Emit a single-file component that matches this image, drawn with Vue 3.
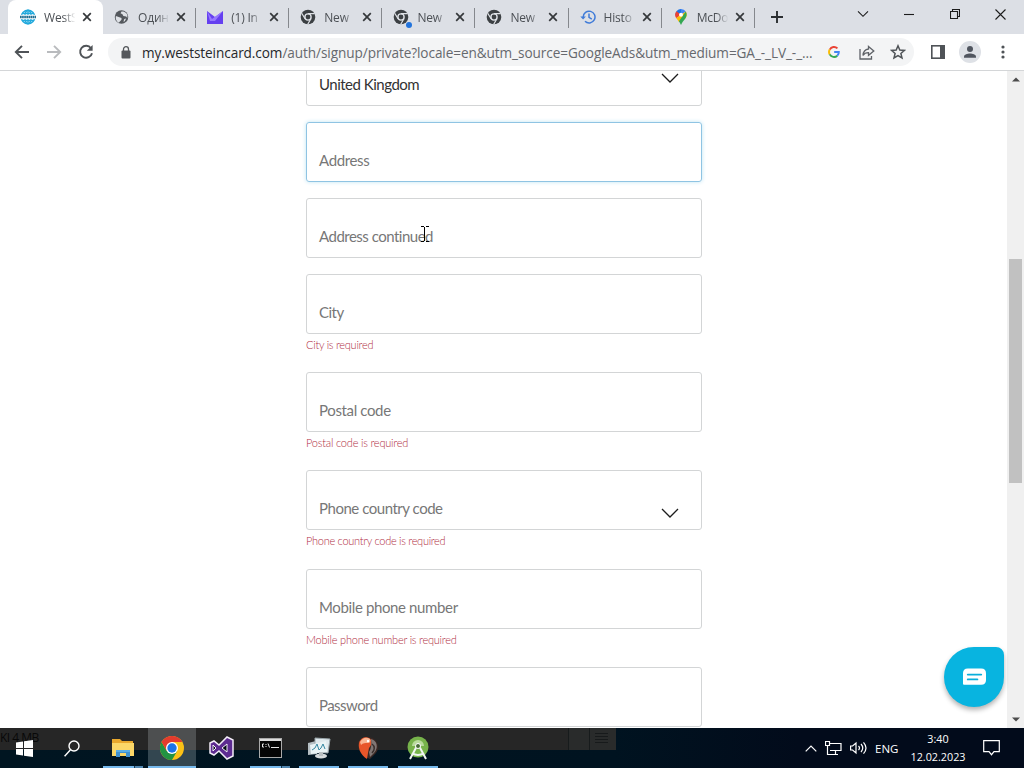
<template>
  <div class="screen">
    <div class="tab-strip">
      <div
        v-for="(tab, index) in tabs"
        :key="index"
        class="tab"
        :class="{ active: index === 0 }"
      >
        <svg class="tab-icon" viewBox="0 0 16 16">
          <g v-if="tab.icon === 'globe'" fill="none" stroke="#22a9dc" stroke-width="1.5">
            <circle cx="8" cy="8" r="6.8" />
            <ellipse cx="8" cy="8" rx="3.2" ry="6.8" />
            <path d="M8 1v14M2 4.5h12M2 11.5h12" />
            <path d="M0 8h16" stroke="#fff" stroke-width="4.4" />
            <path d="M0 8h16" stroke="#246f91" stroke-width="2.6" stroke-dasharray="1.7 .4" />
          </g>
          <g v-else-if="tab.icon === 'earth'">
            <circle cx="8" cy="8" r="7.2" fill="#54585d" />
            <path d="M2 7l3 1 3 1v2l-2 2-1 1.2A7 7 0 0 1 2 7zM8 2l-1 2 2 1 1 2 3 .5 1.2 1.5A6 6 0 0 0 10 2.2zM11 10l2-.5-1.5 3-1.5.5z" fill="#dee1e6" />
          </g>
          <g v-else-if="tab.icon === 'mail'">
            <path d="M0 2l8 6 8-6v13H0z" fill="#6540f0" />
            <path d="M0 2l5 8 11-8-8 10H3z" fill="#9678ff" />
          </g>
          <g v-else-if="tab.icon === 'chrome'">
            <circle cx="8" cy="8" r="7.3" fill="#3c4043" />
            <circle cx="8" cy="8" r="3.1" fill="none" stroke="#dee1e6" stroke-width="1.4" />
            <path d="M8 4.6h6.7M5.1 9.8L1.7 4.2M10.9 9.8l-3.3 5.7" stroke="#dee1e6" stroke-width="1.2" />
          </g>
          <g v-else-if="tab.icon === 'history'" fill="none" stroke="#3f7bd8" stroke-width="1.5">
            <path d="M3.2 8A5.9 5.9 0 1 1 5 12.3M9 4.6v3.8l2.8 1.7" />
            <path d="M.3 7.5h5.6L3.1 10.5z" fill="#3f7bd8" stroke="none" />
          </g>
          <g v-else>
            <path d="M8 0a5.7 5.7 0 0 0-5.6 6.5L8 5.7z" fill="#1a73e8" />
            <path d="M8 0a5.7 5.7 0 0 1 4.8 2.5L8 6z" fill="#4285f4" />
            <path d="M3.5 2.2L8 5.7 3.3 9.2A5.8 5.8 0 0 1 3.5 2.2z" fill="#ea4335" />
            <path d="M3.2 9L12.8 2.6a6 6 0 0 1-.5 7L6 13z" fill="#fbbc04" />
            <path d="M12.8 2.6c1.5 3 .7 5.2-.8 7.3-1.8 2-2.8 3.5-4 6.1-.7-1.4-1.3-2.6-2.1-3.7z" fill="#34a853" />
            <circle cx="8" cy="5.7" r="2" fill="#fff" />
          </g>
        </svg>
        <span v-if="tab.dot" class="tab-dot"></span>
        <span class="tab-title">{{ tab.title }}</span>
        <svg class="tab-close" viewBox="0 0 10 10">
          <path d="M1.2 1.2l7.6 7.6M8.8 1.2L1.2 8.8" stroke="#35383b" stroke-width="1.7" />
        </svg>
      </div>
      <svg class="new-tab" viewBox="0 0 12 12">
        <path d="M6 0v12M0 6h12" stroke="#2b2e31" stroke-width="1.9" />
      </svg>
      <div class="window-controls">
        <svg width="12" height="8" viewBox="0 0 12 8"><path d="M1 1.3l5 5 5-5" /></svg>
        <svg width="10" height="10" viewBox="0 0 10 10"><path d="M0 5.5h10" /></svg>
        <svg width="10" height="10" viewBox="0 0 10 10"><path d="M.5 2.5h7v7h-7zM2.5 2.5v-2h7v7h-2" /></svg>
        <svg width="11" height="11" viewBox="0 0 11 11"><path d="M.5.5l10 10M10.5.5l-10 10" /></svg>
      </div>
    </div>

    <div class="toolbar">
      <svg class="nav-icon" viewBox="0 0 16 16"><path d="M15 8H2M8 1.8L1.8 8 8 14.2" stroke="#4f5357" /></svg>
      <svg class="nav-icon" viewBox="0 0 16 16"><path d="M1 8h13M8 1.8L14.2 8 8 14.2" stroke="#b9bbbe" /></svg>
      <svg class="nav-icon" viewBox="0 0 16 16">
        <path d="M13 4.2A6 6 0 1 0 14 9.2" stroke="#4f5357" />
        <path d="M14.6 1v5.8H8.8z" fill="#4f5357" />
      </svg>
      <div class="address-bar">
        <svg class="lock" viewBox="0 0 10 13">
          <rect x=".5" y="4.5" width="9" height="8" rx="1" fill="#55585c" />
          <path d="M2.5 5V3.2a2.5 2.5 0 0 1 5 0V5" fill="none" stroke="#55585c" stroke-width="1.3" />
        </svg>
        <span class="url"><b>my.weststeincard.com</b>/auth/signup/private?locale=en&amp;utm_source=GoogleAds&amp;utm_medium=GA_-_LV_-_...</span>
        <svg class="google" viewBox="0 0 14 14" fill="none" stroke-width="2.3">
          <path d="M2 4.2A5.7 5.7 0 0 1 11 2.8" stroke="#ea4335" />
          <path d="M2 4.2a5.7 5.7 0 0 0 0 5.6" stroke="#fbbc05" />
          <path d="M2 9.8a5.7 5.7 0 0 0 8.8 1.5" stroke="#34a853" />
          <path d="M10.8 11.3A5.3 5.3 0 0 0 12.6 7H7.2" stroke="#4285f4" />
        </svg>
        <svg class="share" viewBox="0 0 16 15" fill="none" stroke="#5f6368" stroke-width="1.3">
          <path d="M1 4v10h11.5v-3" />
          <path d="M9.5 1.5L14.8 6l-5.3 4.3V7.7C7 7.7 5.2 8.5 4 10.5c.2-3.4 2-6 5.5-6.5z" />
        </svg>
        <svg class="star" viewBox="0 0 16 16">
          <path d="M8 1.8l1.8 4.2 4.6.4-3.5 3 1.1 4.5L8 11.5l-4 2.4 1.1-4.5-3.5-3 4.6-.4z" fill="none" stroke="#4f5357" stroke-width="1.5" />
        </svg>
      </div>
      <svg class="side-panel" viewBox="0 0 14 14">
        <rect x=".8" y=".8" width="12.4" height="12.4" fill="none" stroke="#4f5357" stroke-width="1.6" />
        <rect x="9" y="0" width="5" height="14" fill="#4f5357" />
      </svg>
      <svg class="avatar" viewBox="0 0 22 22">
        <circle cx="11" cy="11" r="11" fill="#dee1e6" />
        <circle cx="11" cy="8" r="3" fill="#50555f" />
        <path d="M5 16.8v-1.3c0-2 3.5-3 6-3s6 1 6 3v1.3z" fill="#50555f" />
      </svg>
      <svg class="menu-dots" viewBox="0 0 4 14" fill="#4f5357">
        <circle cx="2" cy="2" r="1.6" /><circle cx="2" cy="7" r="1.6" /><circle cx="2" cy="12" r="1.6" />
      </svg>
    </div>

    <div class="viewport">
      <form class="form" @submit.prevent>
        <div v-for="field in fields" :key="field.label" class="field">
          <div
            class="field-box"
            :class="{ focused: field.label === focused, filled: field.filled }"
            @click="focused = field.label"
          >
            <span :style="{ letterSpacing: field.spacing + 'px' }">{{ field.label }}</span>
            <svg v-if="field.select" class="chevron" viewBox="0 0 18 10">
              <path d="M1 1l8 8 8-8" fill="none" stroke="#1c1c1c" stroke-width="1.3" />
            </svg>
          </div>
          <div v-if="field.error" class="error-message" :style="{ letterSpacing: field.errorSpacing + 'px' }">{{ field.error }}</div>
        </div>
      </form>

      <svg class="text-cursor" viewBox="0 0 8 16">
        <path d="M0 .5h3M5 .5h3M0 15.5h3M5 15.5h3M3.500 1v14" stroke="#000" fill="none" />
      </svg>

      <button class="chat-button" type="button" aria-label="Chat">
        <svg viewBox="0 0 24 18">
          <path d="M5 0h14q5 0 5 5v7q0 5-5 5H1q-1 0-1-1V5q0-5 5-5z" fill="#fff" />
          <path d="M5 6.5h14M5 11.5h10" stroke="#0aaedb" stroke-width="2" stroke-linecap="round" />
        </svg>
      </button>

      <div class="scrollbar">
        <svg viewBox="0 0 8 5"><path d="M0 4.500L4 .5l4 4z" fill="#4c4c4c" /></svg>
        <div class="thumb"></div>
        <svg viewBox="0 0 8 5"><path d="M0 .5l4 4 4-4z" fill="#4c4c4c" /></svg>
      </div>
    </div>

    <div class="taskbar">
      <div class="overlay"><span>KI 4 MB</span><i></i></div>
      <div class="task">
        <svg width="17" height="17" viewBox="0 0 17 17" fill="#fff">
          <path d="M0 2.500L7 1.500V8H0zM8 1.300L17 0v8H8zM0 9h7v6.500L0 14.500zM8 9h9v8l-9-1.300z" />
        </svg>
      </div>
      <div class="task search">
        <svg width="16" height="17" viewBox="0 0 16 17" fill="none" stroke="#fff" stroke-width="1.4">
          <circle cx="10" cy="6" r="5" /><path d="M6.500 9.700L.6 16.200" />
        </svg>
      </div>
      <div class="task open stacked">
        <svg width="22" height="20" viewBox="0 0 22 20">
          <path d="M0 1h8l2 2h11v4H0z" fill="#e9a82d" />
          <path d="M0 5h22v13H0z" fill="#fbd768" />
          <path d="M4 19v-7h14v7h-4v-4H8v4z" fill="#4091cf" />
          <path d="M4 12h14v2H4z" fill="#5aaee6" />
        </svg>
      </div>
      <div class="task open current">
        <svg width="24" height="24" viewBox="0 0 24 24">
          <circle cx="12" cy="12" r="12" fill="#fbc116" />
          <path d="M1.6 6A12 12 0 0 0 12 24l5.200-9L12 12 6.800 15z" fill="#229342" />
          <path d="M12 6h10.400a12 12 0 0 0-20.800 0l5.200 9z" fill="#e33b2e" />
          <circle cx="12" cy="12" r="6" fill="#fff" />
          <circle cx="12" cy="12" r="4.700" fill="#1a73e8" />
        </svg>
      </div>
      <div class="task">
        <svg width="25" height="24" viewBox="0 0 25 24">
          <path d="M1 7l4-2 5 4 8-8 6 3v16l-6 3-8-8-5 4-4-2z" fill="#5d2b91" stroke="#f3edf8" stroke-width="1.5" />
          <path d="M4 9v6l3-3zM18 8l-5 4 5 4z" fill="#050c16" stroke="#f3edf8" stroke-width="1" />
        </svg>
      </div>
      <div class="task open stacked">
        <svg width="23" height="20" viewBox="0 0 23 20">
          <rect x=".5" y=".5" width="22" height="19" fill="#050505" stroke="#aaa" />
          <path d="M1 2h21" stroke="#ddd" stroke-width="2" />
          <path d="M5 6H3.500v3H5M7 6v1M7 8v1M9 5.500l1.500 4M12 9.500h8" stroke="#e5e5e5" fill="none" />
        </svg>
      </div>
      <div class="task open">
        <svg width="24" height="24" viewBox="0 0 24 24">
          <path d="M1 7l8-2 1 13-9 1z" fill="#b5bfc4" />
          <path d="M8 2l15 1-2 14-13-1z" fill="#dfe9ed" stroke="#99a5aa" />
          <path d="M3 9l16-4 1 11-16 2z" fill="#e9f3f5" />
          <path d="M5 14l3-2 2-4 2 6 2-2 2-4 2 5" fill="none" stroke="#3687a1" />
          <ellipse cx="14" cy="20" rx="6" ry="2.500" fill="#d6dbdd" />
          <path d="M12 16h4v4h-4z" fill="#b8bfc2" />
        </svg>
      </div>
      <div class="task open">
        <svg width="22" height="24" viewBox="0 0 22 24">
          <path d="M1 8C1 1 12-1 17 3c6 5 5 12 0 16l-4 4C5 20 1 15 1 8z" fill="#3a2824" />
          <path d="M2 7C4 0 12 0 14 4c1 3 0 6-2 8l-1 5-1 6C4 19 1 13 2 7z" fill="#e8562a" />
          <path d="M3 6c3-5 7-5 10-3 1 2 0 4-2 4-3 0-5 0-7 2z" fill="#f9b592" />
          <path d="M14 3c6 1 8 9 3 14l-4 4-1-5c2-3 3-8 2-13z" fill="#807674" />
          <path d="M15 8c3 2 3 6 0 9" fill="none" stroke="#3b302e" stroke-width="1.5" />
          <circle cx="11" cy="5" r="1.2" fill="#fff" />
        </svg>
      </div>
      <div class="task open">
        <svg width="22" height="24" viewBox="0 0 22 24">
          <circle cx="11" cy="11" r="10.5" fill="#77b34b" />
          <path d="M5 10a6 6 0 0 1 12 0z" fill="#b9db9d" />
          <path d="M11 8L3 23M11 8l8 15M5 17q6 4 12 0" fill="none" stroke="#f1f5f2" stroke-width="2" />
          <circle cx="11" cy="10" r="2.500" fill="#476c36" stroke="#fff" />
        </svg>
      </div>
      <div class="tray">
        <svg width="12" height="7" viewBox="0 0 12 7"><path d="M.7 6.300L6 1l5.300 5.300" /></svg>
        <svg width="17" height="14" viewBox="0 0 17 14"><path d="M5 2.500h11v7H5M.5.5h4v4h-4zM2.500 4.500v9H13M10.500 10v3" /></svg>
        <svg width="17" height="14" viewBox="0 0 17 14">
          <path d="M.6 5v4h2L6 12V2L2.600 5zM8.500 5q2 2 0 4M11 3q3.500 4 0 8M13.500 1.300q5 5.700 0 11.400" />
        </svg>
        <span class="lang">ENG</span>
        <div class="clock"><span>3:40</span><span>12.02.2023</span></div>
        <svg width="17" height="16" viewBox="0 0 17 16"><path d="M.7.700h15.600v11H11l-2.500 3-2.500-3H.7z" /></svg>
      </div>
    </div>
  </div>
</template>

<script setup>
import { ref } from 'vue';

const tabs = [
  { icon: 'globe', title: 'WestS' },
  { icon: 'earth', title: 'Один' },
  { icon: 'mail', title: '(1) In' },
  { icon: 'chrome', title: 'New' },
  { icon: 'chrome', title: 'New', dot: true },
  { icon: 'chrome', title: 'New' },
  { icon: 'history', title: 'Histo' },
  { icon: 'maps', title: 'McDo' }
];

const focused = ref('Address');

const fields = [
  { label: 'United Kingdom', filled: true, select: true, spacing: -0.5 },
  { label: 'Address', spacing: -0.36 },
  { label: 'Address continued', spacing: -0.5 },
  { label: 'City', error: 'City is required', spacing: -0.5, errorSpacing: -0.25 },
  { label: 'Postal code', error: 'Postal code is required', spacing: -0.36, errorSpacing: -0.2 },
  { label: 'Phone country code', error: 'Phone country code is required', select: true, spacing: -0.47, errorSpacing: -0.28 },
  { label: 'Mobile phone number', error: 'Mobile phone number is required', spacing: -0.37, errorSpacing: -0.22 },
  { label: 'Password', spacing: -0.55 }
];
</script>

<style>
body {
  overflow: hidden;
}
</style>

<style scoped>
.screen {
  width: 1024px;
  height: 768px;
  display: flex;
  flex-direction: column;
  overflow: hidden;
  background: #fff;
  font-family: "Open Sans", "Noto Sans", sans-serif;
}

.screen * {
  box-sizing: border-box;
}

svg {
  display: block;
  flex: none;
}

.tab-strip {
  height: 34px;
  flex: none;
  display: flex;
  align-items: center;
  padding-left: 8px;
  background: #dcdfe5;
}

.tab {
  position: relative;
  width: 93.1px;
  height: 34px;
  flex: none;
  display: flex;
  align-items: center;
  padding-left: 11px;
}

.tab.active {
  width: 95.1px;
  padding-left: 12px;
  background: #fff;
  border-radius: 8px 8px 0 0;
}

.tab:not(.active)::after {
  content: "";
  position: absolute;
  right: 0;
  top: 8px;
  width: 1px;
  height: 20px;
  background: #85888d;
}

.tab:nth-child(2) .tab-icon {
  width: 15px;
  margin-right: 1px;
}

.tab-icon {
  width: 16px;
  height: 16px;
}

.tab-dot {
  position: absolute;
  left: 24px;
  top: 22px;
  width: 6px;
  height: 6px;
  border-radius: 50%;
  background: #2374dc;
}

.tab-title {
  width: 32px;
  margin-left: 8px;
  overflow: hidden;
  white-space: nowrap;
  font-size: 12px;
  letter-spacing: -0.2px;
  color: #4c5055;
  mask-image: linear-gradient(to right, #000 60%, transparent 98%);
}

.tab-close {
  width: 10px;
  height: 10px;
  margin-left: 6px;
}

.new-tab {
  width: 12px;
  height: 12px;
  margin-left: 16px;
}

.window-controls {
  margin-left: 74px;
  display: flex;
  align-items: center;
  gap: 35.5px;
  padding-bottom: 6px;
}

.window-controls path {
  fill: none;
  stroke: #1c1c1c;
  stroke-width: 1.1;
}

.toolbar {
  height: 37px;
  flex: none;
  display: flex;
  align-items: center;
  padding-left: 14px;
  border-bottom: 1px solid #d4d6d8;
  background: #fff;
}

.nav-icon {
  width: 16px;
  height: 16px;
  margin-right: 16px;
  fill: none;
  stroke-width: 1.9;
}

.address-bar {
  width: 806px;
  height: 28px;
  margin-left: -2px;
  display: flex;
  align-items: center;
  padding-left: 13px;
  border-radius: 14px;
  background: #f3f4f5;
}

.lock {
  width: 10px;
  height: 13px;
}

.url {
  width: 686px;
  margin-left: 11px;
  font-size: 13.6px;
  letter-spacing: -0.08px;
  white-space: nowrap;
  color: #66696e;
}

.url b {
  font-weight: 400;
  color: #26282b;
}

.google {
  width: 12px;
  height: 12px;
}

.share {
  width: 16px;
  height: 15px;
  margin-left: 19px;
}

.star {
  width: 16px;
  height: 16px;
  margin-left: 15px;
}

.side-panel {
  width: 14px;
  height: 14px;
  margin-left: 17px;
}

.avatar {
  width: 22px;
  height: 22px;
  margin-left: 14px;
}

.menu-dots {
  width: 4px;
  height: 14px;
  margin-left: 20px;
}

.viewport {
  position: relative;
  height: 657px;
  flex: none;
  display: flex;
  justify-content: flex-end;
  overflow: hidden;
  background: #fff;
}

/* scrolled part way down the sign-up page */
.form {
  width: 396px;
  margin: -25.5px auto 0 306px;
}

.field {
  margin-bottom: 16px;
}

.field-box {
  height: 60px;
  display: flex;
  align-items: flex-end;
  justify-content: space-between;
  padding: 0 22px 10px 12px;
  border: 1px solid #d3d5d6;
  border-radius: 3px;
  font-family: Lato, sans-serif;
  font-size: 15px;
  font-variant-ligatures: none;
  line-height: 22px;
  color: #777;
  white-space: nowrap;
}

.field-box.filled {
  color: #333;
}

.field-box.focused {
  border-color: #8fc4e3;
  box-shadow: 0 0 4px #c0e5f3;
}

.chevron {
  width: 18px;
  height: 10px;
  margin-bottom: 1px;
}

.filled .chevron {
  margin-bottom: 12px;
}

.error-message {
  height: 22.4px;
  padding-top: 2px;
  font-family: Lato, sans-serif;
  font-size: 11px;
  font-weight: 300;
  line-height: 18px;
  color: #b02c42;
  white-space: nowrap;
}

.text-cursor {
  position: absolute;
  left: 421px;
  top: 155px;
  width: 8px;
  height: 16px;
}

.chat-button {
  position: absolute;
  left: 944px;
  top: 576px;
  width: 60px;
  height: 60px;
  display: flex;
  align-items: center;
  justify-content: center;
  padding: 0;
  border: none;
  border-radius: 50% 8px 50% 50%;
  background: #08b4e0;
  box-shadow: 0 3px 5px rgba(0, 0, 0, 0.3);
}

.chat-button svg {
  width: 23px;
  height: 18px;
}

.scrollbar {
  width: 17px;
  height: 100%;
  display: flex;
  flex-direction: column;
  align-items: center;
  padding: 6px 0;
  background: #f0f0f0;
}

.scrollbar svg {
  width: 8px;
  height: 5px;
}

.thumb {
  width: 13px;
  height: 224px;
  margin: 177px 0 auto;
  background: #c1c1c1;
}

.taskbar {
  position: relative;
  height: 40px;
  flex: none;
  display: flex;
  background: linear-gradient(to right, #001521 0, #001320 60%, #020b1b 78%);
}

.overlay {
  position: absolute;
  left: 0;
  top: 0;
  width: 616px;
  height: 22px;
  background: #262626;
  font-size: 12px;
  letter-spacing: -0.5px;
  line-height: 20px;
  color: #080808;
}

.overlay i {
  position: absolute;
  right: 0;
  top: 0;
  width: 48px;
  height: 22px;
  border-left: 1px solid #171b1c;
  background: linear-gradient(to right, #292b2b 20px, #171b1c 20px 21px, #292b2b 21px);
}

.overlay i::after {
  content: "";
  position: absolute;
  left: 26px;
  top: 5px;
  width: 13px;
  height: 11px;
  background: repeating-linear-gradient(#171a1b 0 1px, #292b2b 1px 3px);
}

.task {
  position: relative;
  width: 48px;
  margin-right: 1.1px;
  flex: none;
  display: flex;
  align-items: center;
  justify-content: center;
}

.task.search {
  margin-left: -1px;
  margin-right: 2.9px;
}

.task.open::after {
  content: "";
  position: absolute;
  left: 4px;
  right: 4px;
  bottom: 0;
  height: 2px;
  background: #76b9ed;
}

.task.stacked::after {
  background: linear-gradient(to right, #76b9ed 31px, #18384e 31px 32px, #5187b1 32px);
}

.task.current {
  background: linear-gradient(#4d4f50 22px, #334650 22px);
}

.task.current::after {
  left: 0;
  right: 0;
}

.tray {
  margin-left: auto;
  display: flex;
  align-items: center;
  padding-right: 24px;
  font-size: 12px;
  color: #fff;
}

.tray svg {
  fill: none;
  stroke: #fff;
  stroke-width: 1.2;
  margin-right: 8px;
}

.tray svg:last-child {
  margin-right: 0;
}

.lang {
  width: 24px;
  font-size: 11.5px;
}

.clock {
  width: 60px;
  margin: 0 15px 0 9px;
  display: flex;
  flex-direction: column;
  align-items: center;
  font-size: 10.8px;
  line-height: 18px;
}
</style>
